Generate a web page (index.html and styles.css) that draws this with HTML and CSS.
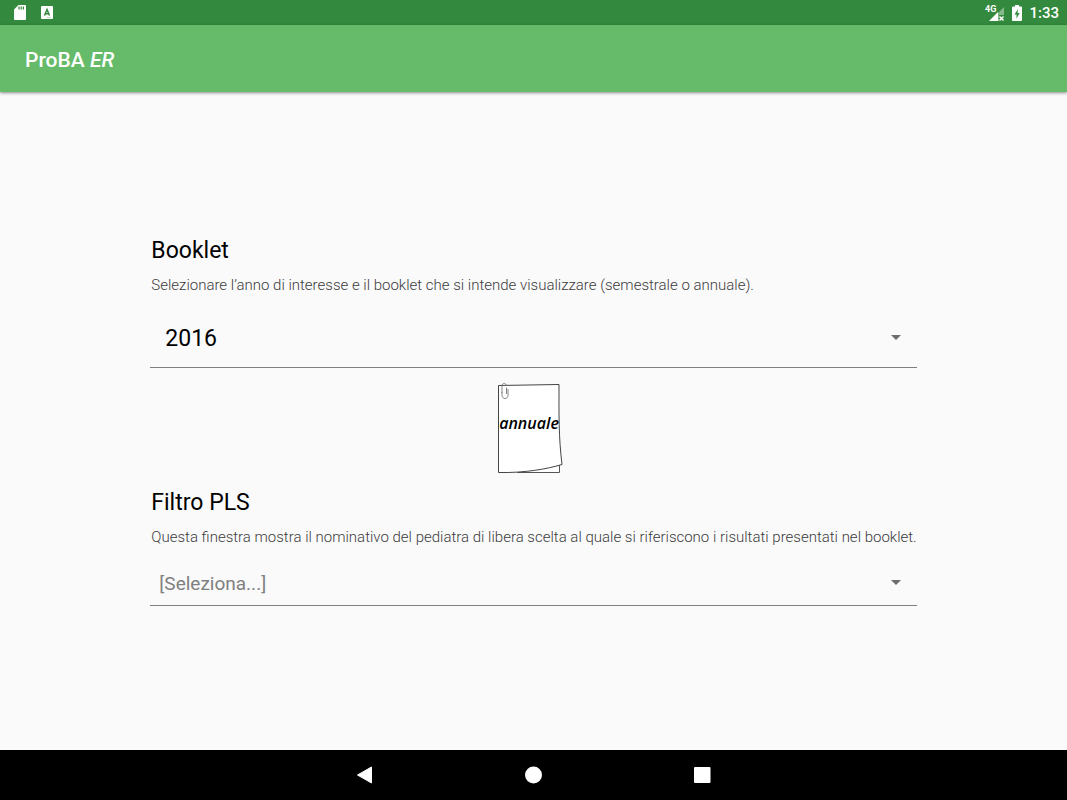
FILE: index.html
```html
<!DOCTYPE html>
<html lang="it">
  <head>
    <meta charset="UTF-8" />
    <meta name="viewport" content="width=device-width, initial-scale=1" />
    <title>ProBA ER</title>
    <link rel="stylesheet" href="styles.css">
  </head>
  <body>
    <div class="status-bar">
      <div class="status-group notifications">
        <svg width="12" height="16" viewBox="0 0 12 16">
          <path fill="#fff" d="M4.500 0H11a1 1 0 0 1 1 1v13a1 1 0 0 1-1 1H1a1 1 0 0 1-1-1V4.500z"/>
          <path stroke="#338a3e" stroke-width="1.200" d="M5 1.500v3M7.200 1.500v3M9.400 1.500v3"/>
        </svg>
        <svg width="12" height="14" viewBox="0 0 12 14">
          <rect width="12" height="13" rx="1" fill="#fff"/>
          <path fill="none" stroke="#338a3e" stroke-width="1.500" d="M3.500 9.500L6 3.500l2.500 6M4.300 7.800h3.400"/>
          <path stroke="#338a3e" stroke-width=".6" d="M6.500 11.500h1M8.500 11.500h1"/>
        </svg>
      </div>
      <div class="status-group">
        <svg width="22" height="24" viewBox="-2 -3 22 24">
          <path fill="#85b98b" d="M19 3v8h-5v6H5z"/>
          <path fill="#338a3e" d="M0 0h10.500v9H0z"/>
          <path fill="#fff" d="M4 17l9-9v9z"/>
          <path stroke="#fff" stroke-width="1.500" d="M14.500 12.500l4 4M18.500 12.500l-4 4"/>
          <text x="0" y="8" class="network">4G</text>
        </svg>
        <svg class="battery" width="10" height="16" viewBox="0 0 10 16">
          <path fill="#fff" d="M3 0h4v1.500h2a1 1 0 0 1 1 1V15a1 1 0 0 1-1 1H1a1 1 0 0 1-1-1V2.500a1 1 0 0 1 1-1h2z"/>
          <path fill="#338a3e" d="M6 4L2.500 9.500h2v4L7.700 8H5.500z"/>
        </svg>
        <span class="clock">1:33</span>
      </div>
    </div>

    <header class="app-bar">
      <h1>ProBA <em>ER</em></h1>
    </header>

    <main>
      <form class="filters">
        <label class="title" for="year">Booklet</label>
        <p>Selezionare l’anno di interesse e il booklet che si intende visualizzare (semestrale o annuale).</p>
        <div class="spinner">
          <select class="year" id="year" name="year">
            <option>2016</option>
          </select>
          <svg width="10" height="5" viewBox="0 0 10 5"><path fill="#6c6c6c" d="M0 0h10L5 5z"/></svg>
        </div>

        <button class="booklet" type="button">
          <svg width="66" height="91" viewBox="0 0 66 91">
            <path fill="#fff" stroke="#555" d="M20 89.500h42.500V82"/>
            <path fill="#fff" stroke="#444" d="M1.500 2.500L62 1.500c0 28-.5 52 3 80C50 86 28 90 1.500 89.500z"/>
            <path fill="none" stroke="#777" stroke-width=".9" d="M9.500 4.500v6.500M5 10V3c.2-3.500 4.200-3.500 4.500 0M5 9v3.500c.5 4 5.800 4 6 0V6"/>
            <text x="32" y="46" class="booklet-name">annuale</text>
          </svg>
        </button>

        <label class="title" for="pls">Filtro PLS</label>
        <p>Questa finestra mostra il nominativo del pediatra di libera scelta al quale si riferiscono i risultati presentati nel booklet.</p>
        <div class="spinner">
          <select class="pls" id="pls" name="pls">
            <option>[Seleziona...]</option>
          </select>
          <svg width="10" height="5" viewBox="0 0 10 5"><path fill="#6c6c6c" d="M0 0h10L5 5z"/></svg>
        </div>
      </form>
    </main>

    <nav class="nav-bar">
      <button type="button" aria-label="Indietro">
        <svg width="18" height="18" viewBox="0 0 18 18"><path fill="#fff" stroke="#fff" stroke-linejoin="round" d="M1.500 9L15.500 1v16z"/></svg>
      </button>
      <button type="button" aria-label="Home">
        <svg width="18" height="18" viewBox="0 0 18 18"><circle cx="8.500" cy="9" r="8.500" fill="#fff"/></svg>
      </button>
      <button type="button" aria-label="Recenti">
        <svg width="18" height="18" viewBox="0 0 18 18"><rect y="1" width="16.500" height="16" rx="1" fill="#fff"/></svg>
      </button>
    </nav>
  </body>
</html>
```
FILE: styles.css
```css
* {
    box-sizing: border-box;
}

body {
    display: flex;
    flex-direction: column;
    min-height: 100vh;
    margin: 0;
    background-color: #fafafa;
    color: #000;
    font-family: Roboto, sans-serif;
}

svg {
    display: block;
}

button {
    padding: 0;
    border: none;
    background: none;
    cursor: pointer;
}

.status-bar {
    display: flex;
    justify-content: space-between;
    align-items: center;
    height: 25px;
    padding: 0 8px 0 14px;
    background-color: #338a3e;
    color: #fff;
}

.status-group {
    display: flex;
    align-items: center;
    gap: 7px;
}

.notifications {
    gap: 15px;
}

.network {
    fill: #fff;
    font-size: 9px;
    font-weight: 700;
}

.clock {
    padding-top: 2px;
    font-size: 15px;
    font-weight: 500;
    line-height: 23px;
}

.app-bar {
    display: flex;
    align-items: center;
    height: 67px;
    padding: 0 25px;
    background-color: #66bb6a;
    box-shadow: 0 1px 3px rgba(0, 0, 0, 0.45);
}

.app-bar h1 {
    margin: 0;
    padding-top: 2px;
    color: #fff;
    font-size: 21px;
    font-weight: 500;
}

main {
    display: flex;
    flex: 1;
    justify-content: center;
    align-items: center;
    padding: 16px;
}

.filters {
    display: flex;
    flex-direction: column;
}

.title {
    padding-left: 1px;
    font-size: 23px;
    line-height: 28px;
}

.filters p {
    margin: 10px 0 14px;
    padding-left: 1px;
    color: #3c3c3c;
    font-size: 15px;
    font-weight: 300;
    line-height: 20px;
}

.spinner {
    display: grid;
    align-items: center;
    border-bottom: 1px solid #808080;
}

.spinner select,
.spinner svg {
    grid-area: 1 / 1;
}

.spinner svg {
    justify-self: end;
    margin-right: 16px;
    pointer-events: none;
}

select {
    width: 100%;
    border: none;
    border-radius: 0;
    background: none;
    font-family: inherit;
    appearance: none;
}

.year {
    height: 58px;
    padding: 2px 15px 0;
    color: #000;
    font-size: 23px;
}

.pls {
    height: 44px;
    padding: 2px 9px 0;
    color: #808080;
    font-size: 19px;
}

.booklet {
    align-self: center;
    margin: 15px 0;
    padding-right: 7px;
}

.booklet-name {
    font-family: "Open Sans", sans-serif;
    font-size: 16px;
    font-style: italic;
    font-weight: 600;
    text-anchor: middle;
}

.nav-bar {
    display: flex;
    justify-content: center;
    height: 50px;
    background-color: #000;
}

.nav-bar button {
    display: flex;
    justify-content: center;
    align-items: center;
    width: 169px;
}
```
